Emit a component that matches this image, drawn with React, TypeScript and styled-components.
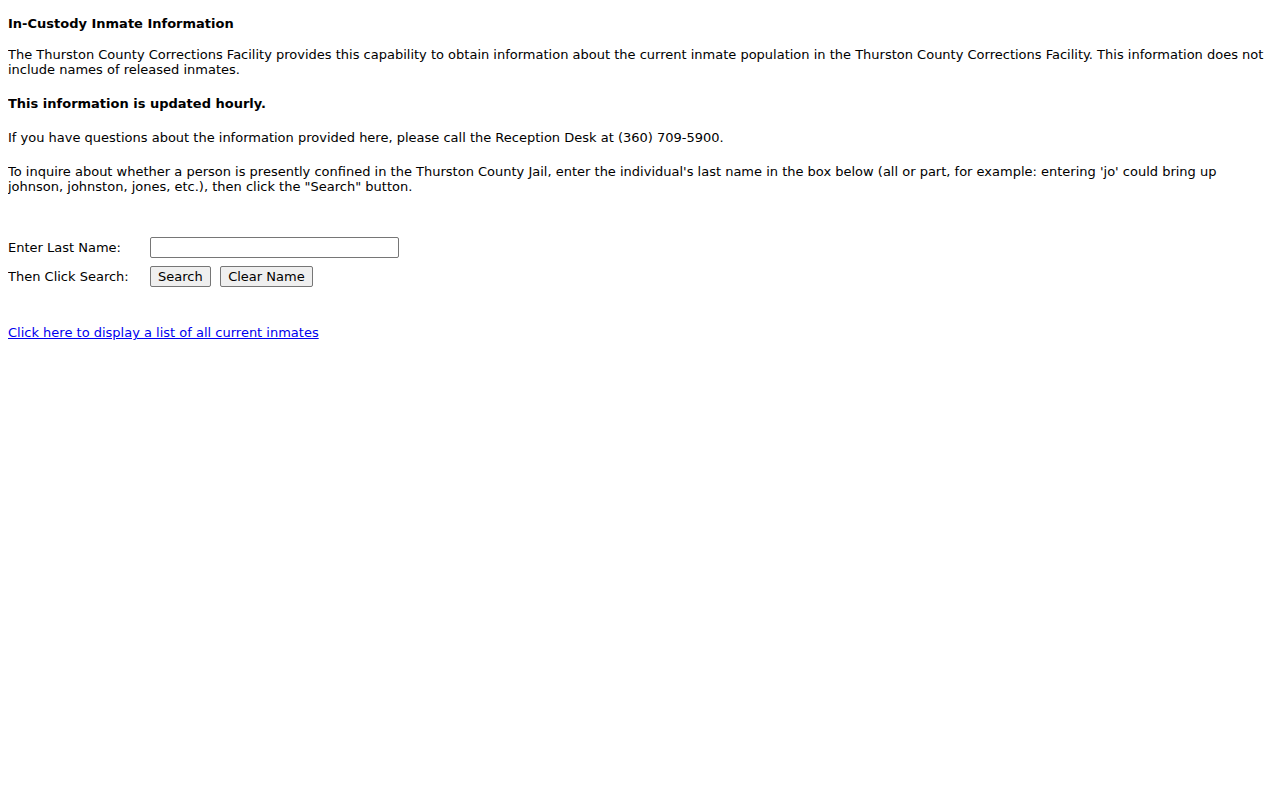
import { createGlobalStyle } from "styled-components";
import styled from "styled-components";

const GlobalStyle = createGlobalStyle`
	body {
		margin: 8px;
		background: #fff;
		color: #000;
		font-family: "DejaVu Sans", Verdana, sans-serif;
		font-size: 13px;
		line-height: 15px;
	}
`;

const Page = styled.div`
	display: flex;
	flex-direction: column;
`;

const Heading = styled.h1`
	font-size: 13px;
	font-weight: bold;
	margin: 8px 0 16px;
	line-height: 15px;
`;

const Para = styled.p<{ $bold?: boolean }>`
	margin: 0 0 19px;
	font-weight: ${(p) => (p.$bold ? "bold" : "normal")};
`;

const Form = styled.form`
	display: grid;
	grid-template-columns: 142px auto;
	row-gap: 8px;
	align-items: center;
	justify-items: start;
	margin-top: 24px;
`;

const Label = styled.label`
	font-size: 13px;
`;

const TextBox = styled.input`
	width: 249px;
	height: 21px;
	box-sizing: border-box;
	border: 1px solid #767676;
	border-radius: 2px;
	padding: 1px 2px;
	font-family: "DejaVu Sans", sans-serif;
	font-size: 13px;
`;

const Buttons = styled.div`
	display: flex;
	gap: 9px;
`;

const Button = styled.button<{ $wide?: boolean }>`
	height: 21px;
	box-sizing: border-box;
	padding: 1px ${(p) => (p.$wide ? "7.5px" : "7px")};
	border: 1px solid #767676;
	border-radius: 2px;
	background: #efefef;
	color: #000;
	font-family: "DejaVu Sans", sans-serif;
	font-size: 13px;
	line-height: 15px;
`;

const ListLink = styled.a`
	margin-top: 38px;
	color: #0000ee;
	text-decoration: underline;
	align-self: flex-start;
`;

export default function App(): JSX.Element {
	return (
		<Page>
			<GlobalStyle />
			<Heading>In-Custody Inmate Information</Heading>
			<Para>
				The Thurston County Corrections Facility provides this capability to
				obtain information about the current inmate population in the Thurston
				County Corrections Facility. This information does not include names of
				released inmates.
			</Para>
			<Para $bold>This information is updated hourly.</Para>
			<Para>
				If you have questions about the information provided here, please call
				the Reception Desk at (360) 709-5900.
			</Para>
			<Para>
				To inquire about whether a person is presently confined in the Thurston
				County Jail, enter the individual's last name in the box below (all or
				part, for example: entering 'jo' could bring up johnson, johnston,
				jones, etc.), then click the "Search" button.
			</Para>
			<Form onSubmit={(e) => e.preventDefault()}>
				<Label htmlFor="lastName">Enter Last Name:</Label>
				<TextBox id="lastName" type="text" />
				<Label>Then Click Search:</Label>
				<Buttons>
					<Button type="submit">Search</Button>
					<Button type="reset" $wide>
						Clear Name
					</Button>
				</Buttons>
			</Form>
			<ListLink href="#">Click here to display a list of all current inmates</ListLink>
		</Page>
	);
}
